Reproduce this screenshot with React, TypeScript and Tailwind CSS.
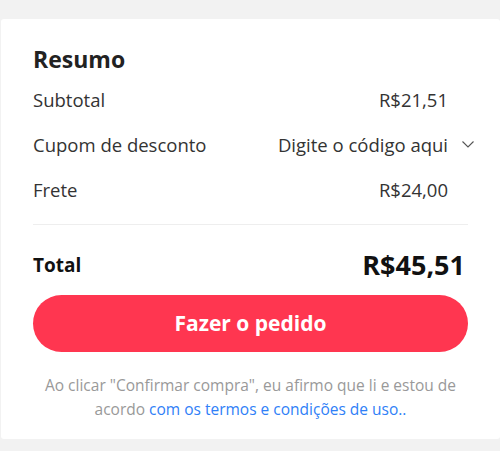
import React from 'react';

const rows = [
    { label: 'Subtotal', value: 'R$21,51' },
    { label: 'Cupom de desconto', value: 'Digite o código aqui', dropdown: true },
    { label: 'Frete', value: 'R$24,00' },
];

const ChevronDown: React.FC = () => (
    <svg width="12" height="7" viewBox="0 0 12 7" className="ml-[14px] -mr-[26px]" fill="none">
        <path d="M0.5 0.5 L6 6 L11.5 0.5" stroke="#555" strokeWidth="1.1" />
    </svg>
);

export default function App() {
    return (
        <div className="h-[451px] bg-[#f2f2f2] pt-[19px] pl-px" style={{ fontFamily: '"Open Sans", "Noto Sans", sans-serif' }}>
            <div className="bg-white rounded-[3px] px-8 pt-[26px] pb-[18px]">
                <h2 className="text-[23px] leading-7 font-bold text-[#222]">Resumo</h2>

                {/* summary lines */}
                <div className="mt-1">
                    {rows.map(r => (
                        <div key={r.label} className="h-[45px] flex items-center justify-between pr-5 text-[18.5px] text-[#333]">
                            <span>{r.label}</span>
                            <span className="flex items-center">
                                {r.value}
                                {r.dropdown && <ChevronDown />}
                            </span>
                        </div>
                    ))}
                </div>

                <div className="mt-[12px] border-t border-[#eeeeee]" />

                <div className="mt-5 h-10 flex items-center justify-between pr-[3px]">
                    <span className="text-[19px] font-bold text-[#111]">Total</span>
                    <span className="text-[27px] font-bold text-[#111]">R$45,51</span>
                </div>

                <button className="mt-[10px] w-full h-[57px] rounded-full bg-[#ff3650] text-white text-[21px] font-bold">
                    Fazer o pedido
                </button>

                <p className="mt-[21px] text-center text-[15.5px] leading-6 text-[#999]">
                    Ao clicar "Confirmar compra", eu afirmo que li e estou de acordo{' '}
                    <span className="text-[#2f80f7]">com os termos e condições de uso..</span>
                </p>
            </div>
        </div>
    );
}
